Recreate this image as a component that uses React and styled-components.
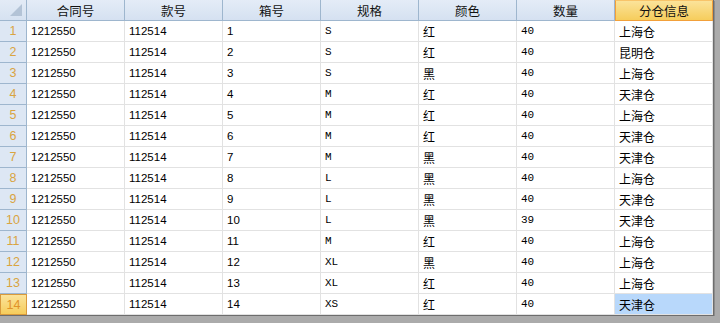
import styled, { createGlobalStyle, css } from "styled-components";

const GlobalStyle = createGlobalStyle`
  html, body {
    margin: 0;
    padding: 0;
    background: #ababab;
  }
`;

const columns = ["合同号", "款号", "箱号", "规格", "颜色", "数量", "分仓信息"];

const rows = [
  ["1212550", "112514", "1", "S", "红", "40", "上海仓"],
  ["1212550", "112514", "2", "S", "红", "40", "昆明仓"],
  ["1212550", "112514", "3", "S", "黑", "40", "上海仓"],
  ["1212550", "112514", "4", "M", "红", "40", "天津仓"],
  ["1212550", "112514", "5", "M", "红", "40", "上海仓"],
  ["1212550", "112514", "6", "M", "红", "40", "天津仓"],
  ["1212550", "112514", "7", "M", "黑", "40", "天津仓"],
  ["1212550", "112514", "8", "L", "黑", "40", "上海仓"],
  ["1212550", "112514", "9", "L", "黑", "40", "天津仓"],
  ["1212550", "112514", "10", "L", "黑", "39", "天津仓"],
  ["1212550", "112514", "11", "M", "红", "40", "上海仓"],
  ["1212550", "112514", "12", "XL", "黑", "40", "上海仓"],
  ["1212550", "112514", "13", "XL", "红", "40", "上海仓"],
  ["1212550", "112514", "14", "XS", "红", "40", "天津仓"],
];

// how each column's text is set: latin sans, narrow mono, or chinese
const kinds = ["sans", "sans", "sans", "mono", "cjk", "mono", "cjk"];

const selRow = 13;
const selCol = 6;

const App = () => {
  return (
    <>
      <GlobalStyle />
      <Sheet>
        <Corner>
          <svg width="12" height="12" viewBox="0 0 12 12">
            <polygon points="12,0 12,12 0,12" fill="#b3c3d6" />
          </svg>
        </Corner>
        {columns.map((c, i) => (
          <ColHeader key={c} $active={i === selCol}>
            {c}
          </ColHeader>
        ))}
        {rows.map((r, ri) => (
          <Row key={ri}>
            <RowHeader $active={ri === selRow}>{ri + 1}</RowHeader>
            {r.map((v, ci) => (
              <Cell
                key={ci}
                $kind={kinds[ci]}
                $selected={ri === selRow && ci === selCol}
              >
                {v}
              </Cell>
            ))}
          </Row>
        ))}
      </Sheet>
    </>
  );
};

const Sheet = styled.div`
  display: grid;
  grid-template-columns: 27px repeat(7, 98px);
  grid-auto-rows: 21px;
  width: 713px;
  background: #fff;
  border-right: 1px solid #6d6d6d;
  border-bottom: 1px solid #6d6d6d;
  box-shadow: 1px 1px 0 #8c8c8c;
`;

const Row = styled.div`
  display: contents;
`;

const Corner = styled.div`
  box-sizing: border-box;
  display: flex;
  align-items: flex-end;
  justify-content: flex-end;
  padding: 0 4px 4px 0;
  background: linear-gradient(#e3ebf6, #d6e2f1);
  border-right: 1px solid #9eb6ce;
  border-bottom: 1px solid #9eb6ce;
`;

const ColHeader = styled.div`
  box-sizing: border-box;
  display: flex;
  align-items: center;
  justify-content: center;
  font-family: "Noto Sans CJK SC", "Liberation Sans", sans-serif;
  font-size: 12.5px;
  color: #111;
  background: linear-gradient(#e4ecf7, #d5e1f1);
  border-right: 1px solid #9eb6ce;
  border-bottom: 1px solid #9eb6ce;
  ${(p) =>
    p.$active &&
    css`
      background: linear-gradient(#fbe39a, #f6cd5c);
      border: 1px solid #f2a03a;
      border-top-color: #f8c46a;
    `}
`;

const RowHeader = styled.div`
  box-sizing: border-box;
  display: flex;
  align-items: center;
  justify-content: center;
  font-family: "Liberation Sans", sans-serif;
  font-size: 12.5px;
  color: #d9a441;
  background: #dde7f4;
  border-right: 1px solid #9eb6ce;
  border-bottom: 1px solid #9eb6ce;
  ${(p) =>
    p.$active &&
    css`
      color: #e0922a;
      background: linear-gradient(#fbe39a, #f6cd5c);
      border: 1px solid #d99a3c;
    `}
`;

const fonts = {
  sans: css`
    font-family: "Liberation Sans", "Noto Sans CJK SC", sans-serif;
    font-size: 11.5px;
  `,
  mono: css`
    font-family: "Liberation Mono", "Noto Sans CJK SC", monospace;
    font-size: 11px;
  `,
  cjk: css`
    font-family: "Noto Sans CJK SC", "Liberation Sans", sans-serif;
    font-size: 12px;
  `,
};

const Cell = styled.div`
  box-sizing: border-box;
  display: flex;
  align-items: center;
  padding-left: 4px;
  ${(p) => fonts[p.$kind]}
  color: #000;
  white-space: nowrap;
  overflow: hidden;
  background: ${(p) => (p.$selected ? "#b8d8fb" : "#fff")};
  border-right: 1px solid #e2e2e2;
  border-bottom: 1px solid #e2e2e2;
`;

export default App;
